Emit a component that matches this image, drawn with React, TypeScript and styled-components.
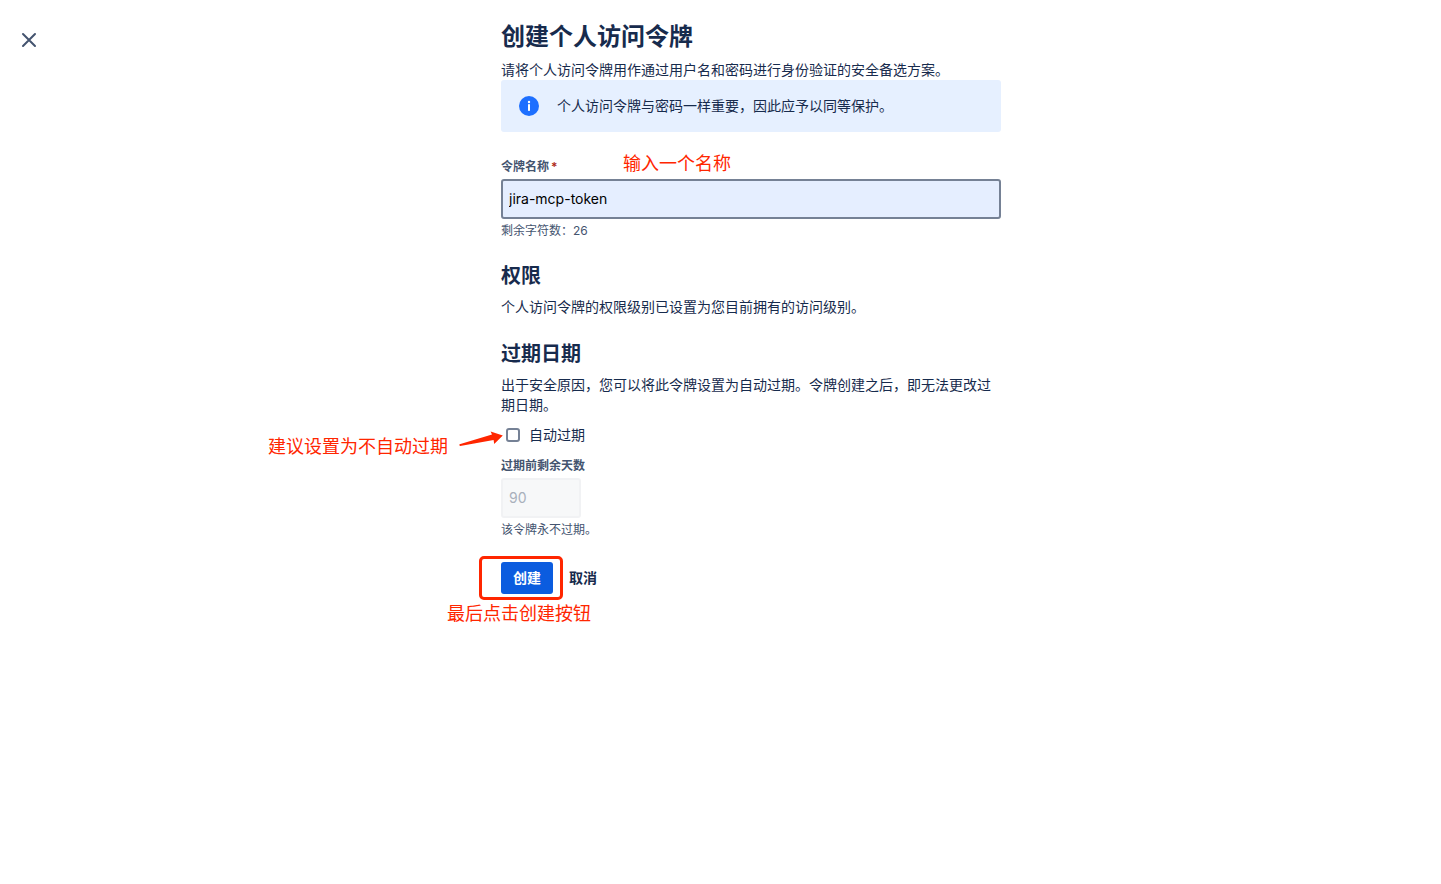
import React, { useState } from "react";
import styled, { createGlobalStyle, css } from "styled-components";

const GlobalStyle = createGlobalStyle`
  *, *::before, *::after { box-sizing: border-box; }
  body {
    margin: 0;
    background: #ffffff;
    color: #172b4d;
    font-family: Inter, "Noto Sans CJK SC", sans-serif;
    font-size: 14px;
    line-height: 20px;
  }
  button, input { font: inherit; color: inherit; }
`;

const Page = styled.div`
  display: flex;
  min-height: 100vh;
`;

const Side = styled.aside`
  flex: none;
  width: 61px;
  padding: 24px 0 0 13px;
`;

const CloseButton = styled.button`
  display: flex;
  align-items: center;
  justify-content: center;
  width: 32px;
  height: 32px;
  padding: 0;
  border: 0;
  border-radius: 3px;
  background: none;
  color: #44546f;
  cursor: pointer;
`;

const Main = styled.main`
  flex: 1;
  min-width: 0;
`;

const Form = styled.form`
  display: flex;
  flex-direction: column;
  max-width: 500px;
  margin: 0 auto;
  padding: 23px 0 40px;
`;

const Title = styled.h1`
  margin: 0 0 9px;
  font-size: 24px;
  line-height: 28px;
  font-weight: 600;
`;

const Heading = styled.h2`
  margin: 25px 0 9px;
  font-size: 20px;
  line-height: 24px;
  font-weight: 600;
`;

const Text = styled.p`
  margin: 0;
`;

const Banner = styled.section`
  display: flex;
  align-items: center;
  gap: 16px;
  padding: 16px;
  border-radius: 3px;
  background: #e6f0ff;
`;

const BannerIcon = styled.svg`
  flex: none;
  margin: -2px 0;
`;

const Field = styled.div<{ $gap: number }>`
  position: relative;
  display: flex;
  flex-direction: column;
  align-items: flex-start;
  gap: 4px;
  margin-top: ${(p) => p.$gap}px;
`;

const Label = styled.label`
  color: #44546f;
  font-size: 12px;
  line-height: 16px;
  font-weight: 600;
`;

const Required = styled.span`
  padding-left: 2px;
  color: #ae2a19;
`;

const TextInput = styled.input<{ $short?: boolean }>`
  width: ${(p) => (p.$short ? "80px" : "100%")};
  height: 40px;
  padding: 0 6px 2px;
  border: 2px solid #758195;
  border-radius: 3px;
  background: #e5eeff;
  color: #000000;
  outline: 0;

  &:disabled {
    border-color: #f1f2f4;
    background: #f7f8f9;
    color: #a9b0bc;
  }
`;

const Helper = styled.div`
  color: #44546f;
  font-size: 12px;
  line-height: 16px;
`;

const CheckRow = styled.div`
  position: relative;
  display: flex;
  align-items: center;
  gap: 9px;
  margin-top: 10px;
  padding-left: 5px;
`;

const Checkbox = styled.input`
  appearance: none;
  width: 14px;
  height: 14px;
  margin: 0;
  border: 2px solid #758195;
  border-radius: 3px;
  background: #ffffff;

  &:checked {
    border-color: #0c66e4;
    background: #0c66e4;
  }
`;

const Actions = styled.div`
  position: relative;
  display: flex;
  gap: 4px;
  margin-top: 24px;
`;

const Button = styled.button<{ $primary?: boolean }>`
  height: 32px;
  padding: 0 12px;
  border: 0;
  border-radius: 3px;
  background: none;
  font-weight: 600;
  cursor: pointer;
  ${(p) =>
    p.$primary &&
    css`
      background: #0b5cdf;
      color: #ffffff;
    `}
`;

const Note = styled.span<{ $left: number; $top: number }>`
  position: absolute;
  left: ${(p) => p.$left}px;
  top: ${(p) => p.$top}px;
  color: #ff2600;
  font-size: 18px;
  line-height: 24px;
  white-space: nowrap;
  pointer-events: none;
`;

const Arrow = styled.svg`
  position: absolute;
  left: -42px;
  top: 4px;
  pointer-events: none;
`;

const Highlight = styled.span`
  position: absolute;
  left: -22px;
  top: -6px;
  width: 84px;
  height: 44px;
  border: 3px solid #ff2600;
  border-radius: 5px;
  pointer-events: none;
`;

const NAME_LIMIT = 40;

export default function App() {
  const [name, setName] = useState("jira-mcp-token");
  const [expires, setExpires] = useState(false);
  const [days, setDays] = useState("90");

  return (
    <>
      <GlobalStyle />
      <Page>
        <Side>
          <CloseButton type="button" aria-label="关闭">
            <svg width="16" height="16" viewBox="0 0 16 16" fill="none" stroke="currentColor" strokeWidth="2" strokeLinecap="round">
              <path d="M2 2l12 12M14 2L2 14" />
            </svg>
          </CloseButton>
        </Side>
        <Main>
          <Form onSubmit={(e) => e.preventDefault()}>
            <Title>创建个人访问令牌</Title>
            <Text>请将个人访问令牌用作通过用户名和密码进行身份验证的安全备选方案。</Text>
            <Banner>
              <BannerIcon width="24" height="24" viewBox="0 0 24 24" aria-hidden="true">
                <circle cx="12" cy="12" r="10" fill="#1d6fff" />
                <circle cx="12" cy="8" r="1.2" fill="#fff" />
                <rect x="11" y="10" width="2" height="7" rx="0.8" fill="#fff" />
              </BannerIcon>
              <Text>个人访问令牌与密码一样重要，因此应予以同等保护。</Text>
            </Banner>

            <Field $gap={27}>
              <Label htmlFor="token-name">
                令牌名称<Required aria-hidden="true">*</Required>
              </Label>
              <TextInput
                id="token-name"
                type="text"
                required
                maxLength={NAME_LIMIT}
                value={name}
                onChange={(e) => setName(e.target.value)}
              />
              <Helper>剩余字符数：{NAME_LIMIT - name.length}</Helper>
              <Note $left={122} $top={-7}>输入一个名称</Note>
            </Field>

            <Heading>权限</Heading>
            <Text>个人访问令牌的权限级别已设置为您目前拥有的访问级别。</Text>

            <Heading>过期日期</Heading>
            <Text>出于安全原因，您可以将此令牌设置为自动过期。令牌创建之后，即无法更改过期日期。</Text>

            <CheckRow>
              <Checkbox id="auto-expire" type="checkbox" checked={expires} onChange={(e) => setExpires(e.target.checked)} />
              <label htmlFor="auto-expire">自动过期</label>
              <Note $left={-233} $top={10}>建议设置为不自动过期</Note>
              <Arrow width="46" height="18" viewBox="0 0 46 18" aria-hidden="true">
                <path d="M0.6 15.2L33 5.6L31.6 2.4L43.8 6.4L35.2 15L34.6 11L1.2 17Q-0.2 16.4 0.6 15.2Z" fill="#ff2600" />
              </Arrow>
            </CheckRow>

            <Field $gap={13}>
              <Label htmlFor="days-left">过期前剩余天数</Label>
              <TextInput id="days-left" type="text" $short disabled={!expires} value={days} onChange={(e) => setDays(e.target.value)} />
              <Helper>该令牌永不过期。</Helper>
            </Field>

            <Actions>
              <Button type="submit" $primary>创建</Button>
              <Button type="button">取消</Button>
              <Highlight />
              <Note $left={-54} $top={40}>最后点击创建按钮</Note>
            </Actions>
          </Form>
        </Main>
      </Page>
    </>
  );
}
